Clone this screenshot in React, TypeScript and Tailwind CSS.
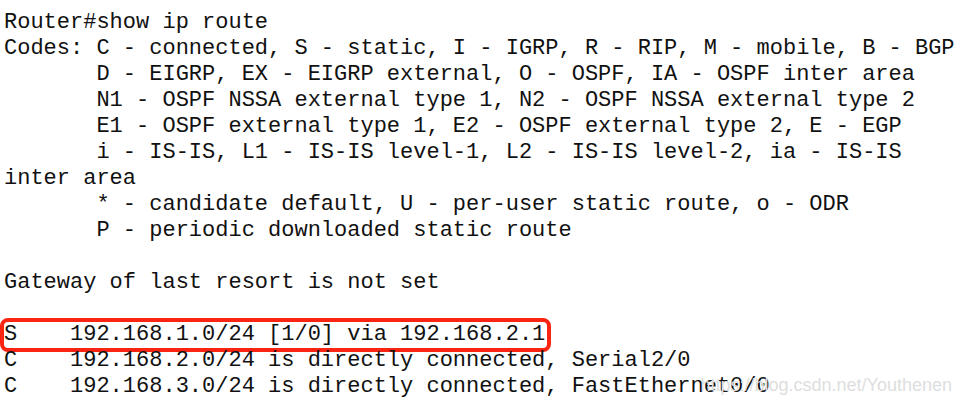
const lines = [
  "Router#show ip route",
  "Codes: C - connected, S - static, I - IGRP, R - RIP, M - mobile, B - BGP",
  "       D - EIGRP, EX - EIGRP external, O - OSPF, IA - OSPF inter area",
  "       N1 - OSPF NSSA external type 1, N2 - OSPF NSSA external type 2",
  "       E1 - OSPF external type 1, E2 - OSPF external type 2, E - EGP",
  "       i - IS-IS, L1 - IS-IS level-1, L2 - IS-IS level-2, ia - IS-IS",
  "inter area",
  "       * - candidate default, U - per-user static route, o - ODR",
  "       P - periodic downloaded static route",
  "",
  "Gateway of last resort is not set",
  "",
];

const routes = [
  "C    192.168.2.0/24 is directly connected, Serial2/0",
  "C    192.168.3.0/24 is directly connected, FastEthernet0/0",
];

export default function App() {
  return (
    <div className="relative w-[961px] h-[403px] bg-white overflow-hidden">
      <div className="pt-[10px] pl-[4px] text-[22px] leading-[26px] text-[#111] whitespace-pre font-['Liberation_Mono','Courier_New',monospace]">
        {lines.map((line, i) => (
          <div key={i} className="h-[26px]">
            {line}
          </div>
        ))}
        <div className="w-fit -my-[4px] -ml-[4px] pr-[2px] border-4 border-[#fa2412] rounded-[8px] h-[34px]">
          S    192.168.1.0/24 [1/0] via 192.168.2.1
        </div>
        {routes.map((line, i) => (
          <div key={i} className="h-[26px]">
            {line}
          </div>
        ))}
      </div>
      <div className="absolute right-[9px] top-[375px] text-[18px] leading-[20px] text-[#dedede] font-['Liberation_Sans',Arial,sans-serif]">
        https://blog.csdn.net/Youthenen
      </div>
    </div>
  );
}
